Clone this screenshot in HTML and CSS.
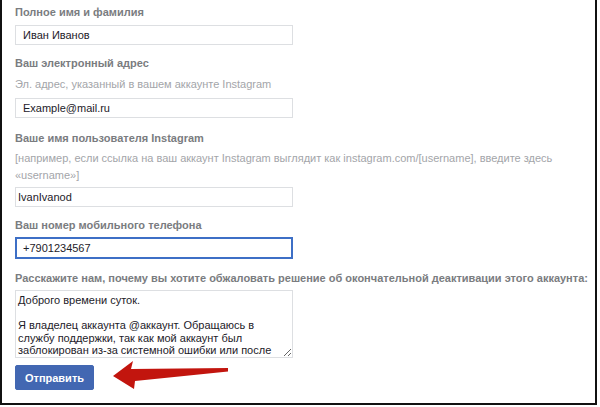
FILE: index.html
```html
<!DOCTYPE html>
<html lang="ru">
<head>
<meta charset="utf-8">
<link rel="stylesheet" href="styles.css">
</head>
<body>
<div class="frame">
  <form class="form">
    <div class="label l1">Полное имя и фамилия</div>
    <input class="field f1" type="text" value="Иван Иванов">

    <div class="label l2">Ваш электронный адрес</div>
    <div class="help h2">Эл. адрес, указанный в вашем аккаунте Instagram</div>
    <input class="field f2" type="text" value="Example@mail.ru">

    <div class="label l3">Ваше имя пользователя Instagram</div>
    <div class="help h3">[например, если ссылка на ваш аккаунт Instagram выглядит как instagram.com/[username], введите здесь «username»]</div>
    <input class="field f3" type="text" value="IvanIvanod">

    <div class="label l4">Ваш номер мобильного телефона</div>
    <input class="field phone" type="text" value="+7901234567">

    <div class="label l5">Расскажите нам, почему вы хотите обжаловать решение об окончательной деактивации этого аккаунта:</div>
    <textarea class="area">Доброго времени суток.

Я владелец аккаунта @аккаунт. Обращаюсь в
службу поддержки, так как мой аккаунт был
заблокирован из-за системной ошибки или после
неправомерной блокировки.</textarea>

    <button class="submit" type="button">Отправить</button>
  </form>
  <svg class="arrow" width="130" height="40" viewBox="0 0 130 40">
    <polygon points="3,21 23,6 21,14 118,13 118,16.5 25,26 24,34" fill="#c2150e"/>
  </svg>
</div>
</body>
</html>
```

FILE: styles.css
```css
html, body {
  margin: 0;
  padding: 0;
  background: #fff;
}
body {
  width: 600px;
  height: 407px;
  overflow: hidden;
  font-family: "Liberation Sans", Arial, sans-serif;
}
.frame {
  position: relative;
  width: 597px;
  height: 405px;
  box-sizing: border-box;
  border: 2px solid #111;
  border-top: none;
  background: #fff;
}
.form {
  display: flex;
  flex-direction: column;
  align-items: flex-start;
  padding: 4px 0 0 13px;
}
.label {
  font-size: 11px;
  font-weight: bold;
  line-height: 16px;
  color: #7a7c80;
  white-space: nowrap;
}
.help {
  font-size: 11px;
  line-height: 17px;
  color: #a3a5a9;
}
.field {
  box-sizing: border-box;
  width: 278px;
  height: 20px;
  margin: 0;
  padding: 0 7px;
  border: 1px solid #dddfe2;
  border-radius: 0;
  font-family: "Liberation Sans", Arial, sans-serif;
  font-size: 11px;
  color: #1d2129;
  background: #fff;
  outline: none;
}
.f1 { margin-top: 5px; }
.l2 { margin-top: 10px; }
.h2 { margin-top: 5px; line-height: 16px; }
.f2 { margin-top: 6px; }
.l3 { margin-top: 12px; }
.h3 { margin-top: 4px; width: 560px; }
.f3 { margin-top: 3px; padding: 0 2px; }
.l4 { margin-top: 10px; }
.phone {
  margin-top: 4px;
  height: 22px;
  border: 2px solid #3d6fc6;
  padding: 0 6px;
}
.l5 { margin-top: 11px; }
.area {
  box-sizing: border-box;
  width: 278px;
  height: 68px;
  margin: 4px 0 0 0;
  padding: 3px 2px;
  border: 1px solid #dddfe2;
  font-family: "Liberation Sans", Arial, sans-serif;
  font-size: 11px;
  line-height: 12.5px;
  color: #1d2129;
  white-space: pre;
  overflow: hidden;
  resize: both;
  outline: none;
}
.submit {
  margin-top: 7px;
  width: 79px;
  height: 25px;
  padding: 0;
  border: 1px solid #4267b2;
  border-radius: 2px;
  background: #4267b2;
  color: #fff;
  font-family: "Liberation Sans", Arial, sans-serif;
  font-size: 11px;
  font-weight: bold;
}
.arrow {
  position: absolute;
  left: 108px;
  top: 355px;
}
```
